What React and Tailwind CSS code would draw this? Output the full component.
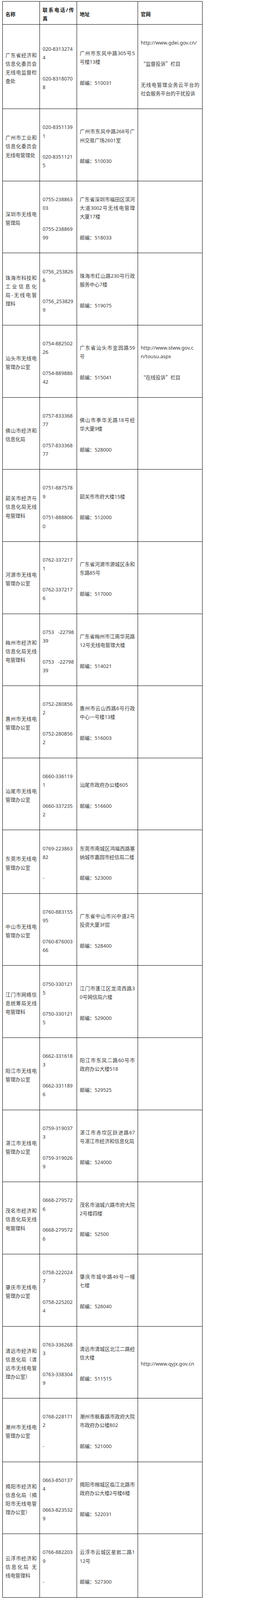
import React from "react";

// 全角引号用中文字体显示
const Q = ({ children }) => (
  <span className="leading-none [font-family:'Noto_Sans_CJK_SC',sans-serif]">{children}</span>
);

const rows = [
  {
    name: [["广东省经济和", "信息化委员会", "无线电监督检", "查处"]],
    phone: [["020-8313274", "4"], ["020-8318070", "8"]],
    addr: [["广州市东风中路305号5", "号楼13楼"], ["邮编：510031"]],
    web: [
      ["http://www.gdei.gov.cn/"],
      [
        <>
          <Q>“</Q>监督投诉<Q>”</Q>栏目
        </>,
      ],
      ["无线电管理业务云平台的", "社会服务平台的干扰投诉"],
    ],
  },
  {
    name: [["广州市工业和", "信息化委员会", "无线电管理处"]],
    phone: [["020-8351139", "1"], ["020-8351121", "5"]],
    addr: [["广州市东风中路268号广", "州交易广场2601室"], ["邮编：510030"]],
  },
  {
    name: [["深圳市无线电", "管理局"]],
    phone: [["0755-238863", "03"], ["0755-238869", "99"]],
    addr: [["广东省深圳市福田区滨河", "大道3002号无线电管理", "大厦17楼"], ["邮编：518033"]],
  },
  {
    name: [["珠海市科技和", "工业信息化", "局-无线电管", "理科"]],
    phone: [["0756_253826", "6"], ["0756_253829", "9"]],
    addr: [["珠海市红山路230号行政", "服务中心7楼"], ["邮编：519075"]],
  },
  {
    name: [["汕头市无线电", "管理办公室"]],
    phone: [["0754-882502", "26"], ["0754-889886", "42"]],
    addr: [["广东省汕头市金园路59", "号"], ["邮编：515041"]],
    web: [
      ["http://www.stww.gov.c", "n/tousu.aspx"],
      [
        <>
          <Q>“</Q>在线投诉<Q>”</Q>栏目
        </>,
      ],
    ],
  },
  {
    name: [["佛山市经济和", "信息化局"]],
    phone: [["0757-833368", "77"], ["0757-833368", "77"]],
    addr: [["佛山市季华无路18号经", "华大厦9楼"], ["邮编：528000"]],
  },
  {
    name: [["韶关市经济与", "信息化局无线", "电管理科"]],
    phone: [["0751-887578", "9"], ["0751-888806", "0"]],
    addr: [["韶关市市府大楼15楼"], ["邮编：512000"]],
  },
  {
    name: [["河源市无线电", "管理办公室"]],
    phone: [["0762-337217", "1"], ["0762-337217", "6"]],
    addr: [["广东省河源市源城区永和", "东路85号"], ["邮编：517000"]],
  },
  {
    name: [["梅州市经济和", "信息化局无线", "电管理科"]],
    phone: [["0753\u00a0\u00a0\u00a0-22798", "39"], ["0753\u00a0\u00a0\u00a0-22798", "39"]],
    addr: [["广东省梅州市江南华苑路", "12号无线电管理大楼"], ["邮编：514021"]],
  },
  {
    name: [["惠州市无线电", "管理办公室"]],
    phone: [["0752-280856", "2"], ["0752-280856", "2"]],
    addr: [["惠州市云山西路6号行政", "中心一号楼13楼"], ["邮编：516003"]],
  },
  {
    name: [["汕尾市无线电", "管理办公室"]],
    phone: [["0660-336119", "1"], ["0660-337235", "2"]],
    addr: [["汕尾市政府办公楼605"], ["邮编：516600"]],
  },
  {
    name: [["东莞市无线电", "管理办公室"]],
    phone: [["0769-223863", "82"], ["-"]],
    addr: [["东莞市南城区鸿福西路塞", "纳城市嘉园市经信局二楼"], ["邮编：523000"]],
  },
  {
    name: [["中山市无线电", "管理办公室"]],
    phone: [["0760-883155", "95"], ["0760-876003", "66"]],
    addr: [["广东省中山市兴中道2号", "投资大厦3F层"], ["邮编：528400"]],
  },
  {
    name: [["江门市网络信", "息统筹局无线", "电管理科"]],
    phone: [["0750-330121", "5"], ["0750-330121", "5"]],
    addr: [["江门市蓬江区龙湾西路3", "0号网信局六楼"], ["邮编：529000"]],
  },
  {
    name: [["阳江市无线电", "管理办公室"]],
    phone: [["0662-331618", "3"], ["0662-331189", "6"]],
    addr: [["阳江市东风二路60号市", "政府办公大楼518"], ["邮编：529525"]],
  },
  {
    name: [["湛江市无线电", "管理办公室"]],
    phone: [["0759-319037", "3"], ["0759-319026", "9"]],
    addr: [["湛江市赤坎区跃进路67", "号湛江市经济和信息化局"], ["邮编：524000"]],
  },
  {
    name: [["茂名市经济和", "信息化局无线", "电管理科"]],
    phone: [["0668-279572", "6"], ["0668-279572", "6"]],
    addr: [["茂名市油城六路市府大院", "2号楼四楼"], ["邮编：52500"]],
  },
  {
    name: [["肇庆市无线电", "管理办公室"]],
    phone: [["0758-222024", "7"], ["0758-225202", "4"]],
    addr: [["肇庆市城中路49号一幢", "七楼"], ["邮编：526040"]],
  },
  {
    name: [["清远市经济和", "信息化局（清", "远市无线电管", "理办公室）"]],
    phone: [["0763-336268", "3"], ["0763-338304", "9"]],
    addr: [["清远市清城区北江二路经", "信大楼"], ["邮编：511515"]],
    web: [["http://www.qyjx.gov.cn"]],
  },
  {
    name: [["潮州市无线电", "管理办公室"]],
    phone: [["0768-228171", "2"], ["-"]],
    addr: [["潮州市枫春路市政府大院", "市政府办公楼802"], ["邮编：521000"]],
  },
  {
    name: [["揭阳市经济和", "信息化局（揭", "阳市无线电管", "理办公室）"]],
    phone: [["0663-850137", "4"], ["0663-823532", "9"]],
    addr: [["揭阳市榕城区临江北路市", "政府办公大楼2号楼6楼"], ["邮编：522031"]],
  },
  {
    name: [["云浮市经济和", "信息化局 无", "线电管理科"]],
    phone: [["0766-882203", "9"], ["-"]],
    addr: [["云浮市云城区星岩二路1", "12号"], ["邮编：527300"]],
  },
];

const Para = ({ lines }) => (
  <div>
    {lines.map((line, i) => (
      <div
        key={i}
        className={
          i < lines.length - 1
            ? "h-[22.1px] whitespace-nowrap [text-align-last:justify]"
            : "h-[22.1px] whitespace-nowrap"
        }
      >
        {line}
      </div>
    ))}
  </div>
);

const Cell = ({ paras = [], head }) => (
  <div
    className={
      "flex flex-col justify-center gap-[31.75px] border-r border-b border-black px-[7px] " +
      (head ? "pt-[10.3px] pb-[3.4px] font-bold text-[#222]" : "pt-[35.2px] pb-[28.3px]")
    }
  >
    {paras.map((p, i) => (
      <Para key={i} lines={p} />
    ))}
  </div>
);

const App = () => {
  return (
    <div className="bg-white pl-[6px] pt-[3px] text-[12.7px] leading-[22.1px] text-[#3a3a3a] [font-family:'Noto_Sans','Noto_Sans_CJK_SC',sans-serif]">
      <div className="grid w-[512px] grid-cols-[95px_95px_156px_165px] border-l border-t border-black">
        <Cell head paras={[["名称"]]} />
        <Cell head paras={[["联系电话/传", "真"]]} />
        <Cell head paras={[["地址"]]} />
        <Cell head paras={[["官网"]]} />
        {rows.map((row, i) => (
          <React.Fragment key={i}>
            <Cell paras={row.name} />
            <Cell paras={row.phone} />
            <Cell paras={row.addr} />
            <Cell paras={row.web} />
          </React.Fragment>
        ))}
      </div>
    </div>
  );
};

export default App;
